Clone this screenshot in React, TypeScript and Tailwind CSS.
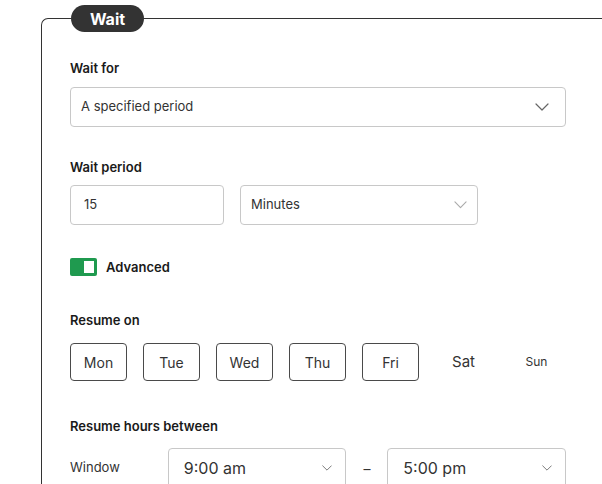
import React from "react";

function Chevron({ size = 14, color = "#555" }: { size?: number; color?: string }) {
  return (
    <svg width={size} height={size / 2 + 1} viewBox="0 0 14 8" fill="none">
      <path d="M1 1l6 6 6-6" stroke={color} strokeWidth="1.2" strokeLinecap="round" strokeLinejoin="round" />
    </svg>
  );
}

function DayButton({ label }: { label: string }) {
  return (
    <button className="w-[57px] h-[38px] rounded-[4px] border border-[#4a4a4a] text-[14px] text-[#333] flex items-center justify-center">
      {label}
    </button>
  );
}

export default function App() {
  return (
    <div
      className="w-[602px] h-[484px] overflow-hidden bg-white text-[#222]"
      style={{ fontFamily: "Inter, 'Noto Sans', sans-serif" }}
    >
      <div className="relative ml-[41px] mt-[18px] w-[620px] h-[500px] border-l border-t border-[#333] rounded-tl-[7px]">
        {/* title pill sits on the border */}
        <div className="absolute left-[29px] top-[-14px] w-[73px] h-[27px] rounded-full bg-[#333] text-white text-[16px] font-bold flex items-center justify-center">
          Wait
        </div>

        <div className="pl-[28px] pt-[39px] w-[524px] flex flex-col">
          <div className="text-[13px] leading-[20px] font-semibold text-[#1a1a1a]">Wait for</div>
          <div className="mt-[9px] h-[40px] rounded-[4px] border border-[#c8c8c8] flex items-center justify-between pl-[10px] pr-[16px] text-[13px] text-[#333]">
            <span>A specified period</span>
            <Chevron size={14} color="#666" />
          </div>

          <div className="mt-[30px] text-[13px] leading-[20px] font-semibold text-[#1a1a1a]">Wait period</div>
          <div className="mt-[8px] flex gap-[16px]">
            <div className="w-[154px] h-[40px] rounded-[4px] border border-[#c8c8c8] flex items-center pl-[13px] text-[13px] text-[#333]">
              15
            </div>
            <div className="w-[238px] h-[40px] rounded-[4px] border border-[#c8c8c8] flex items-center justify-between pl-[10px] pr-[10px] text-[13px] text-[#333]">
              <span>Minutes</span>
              <Chevron size={13} color="#aaa" />
            </div>
          </div>

          <div className="mt-[33px] h-[18px] flex items-center gap-[9px]">
            <div className="w-[27px] h-[18px] rounded-[2px] bg-[#1f9a4f] flex items-center justify-end pr-[3px]">
              <div className="w-[10px] h-[12px] bg-white" />
            </div>
            <span className="text-[13px] leading-[18px] font-semibold text-[#1a1a1a]">Advanced</span>
          </div>

          <div className="mt-[34px] text-[13px] leading-[20px] font-semibold text-[#1a1a1a]">Resume on</div>
          <div className="mt-[13px] flex gap-[16px] items-center">
            <DayButton label="Mon" />
            <DayButton label="Tue" />
            <DayButton label="Wed" />
            <DayButton label="Thu" />
            <DayButton label="Fri" />
            <div className="w-[57px] h-[38px] flex items-center justify-center text-[15px] text-[#333]">Sat</div>
            <div className="w-[57px] h-[38px] flex items-center justify-center text-[12px] text-[#333]">Sun</div>
          </div>

          <div className="mt-[35px] text-[13px] leading-[20px] font-semibold text-[#1a1a1a]">Resume hours between</div>
          <div className="mt-[12px] flex items-start">
            <div className="w-[98px] h-[40px] flex items-center text-[13px] text-[#333]">Window</div>
            <div className="w-[179px] h-[40px] rounded-[4px] border border-[#c8c8c8] flex items-center justify-between pl-[15px] pr-[13px] text-[16px] text-[#333]">
              <span>9:00 am</span>
              <Chevron size={10} color="#666" />
            </div>
            <div className="w-[41px] h-[40px] flex items-center justify-center text-[14px] text-[#333]">–</div>
            <div className="w-[179px] h-[40px] rounded-[4px] border border-[#c8c8c8] flex items-center justify-between pl-[15px] pr-[13px] text-[16px] text-[#333]">
              <span>5:00 pm</span>
              <Chevron size={10} color="#666" />
            </div>
          </div>
        </div>
      </div>
    </div>
  );
}
